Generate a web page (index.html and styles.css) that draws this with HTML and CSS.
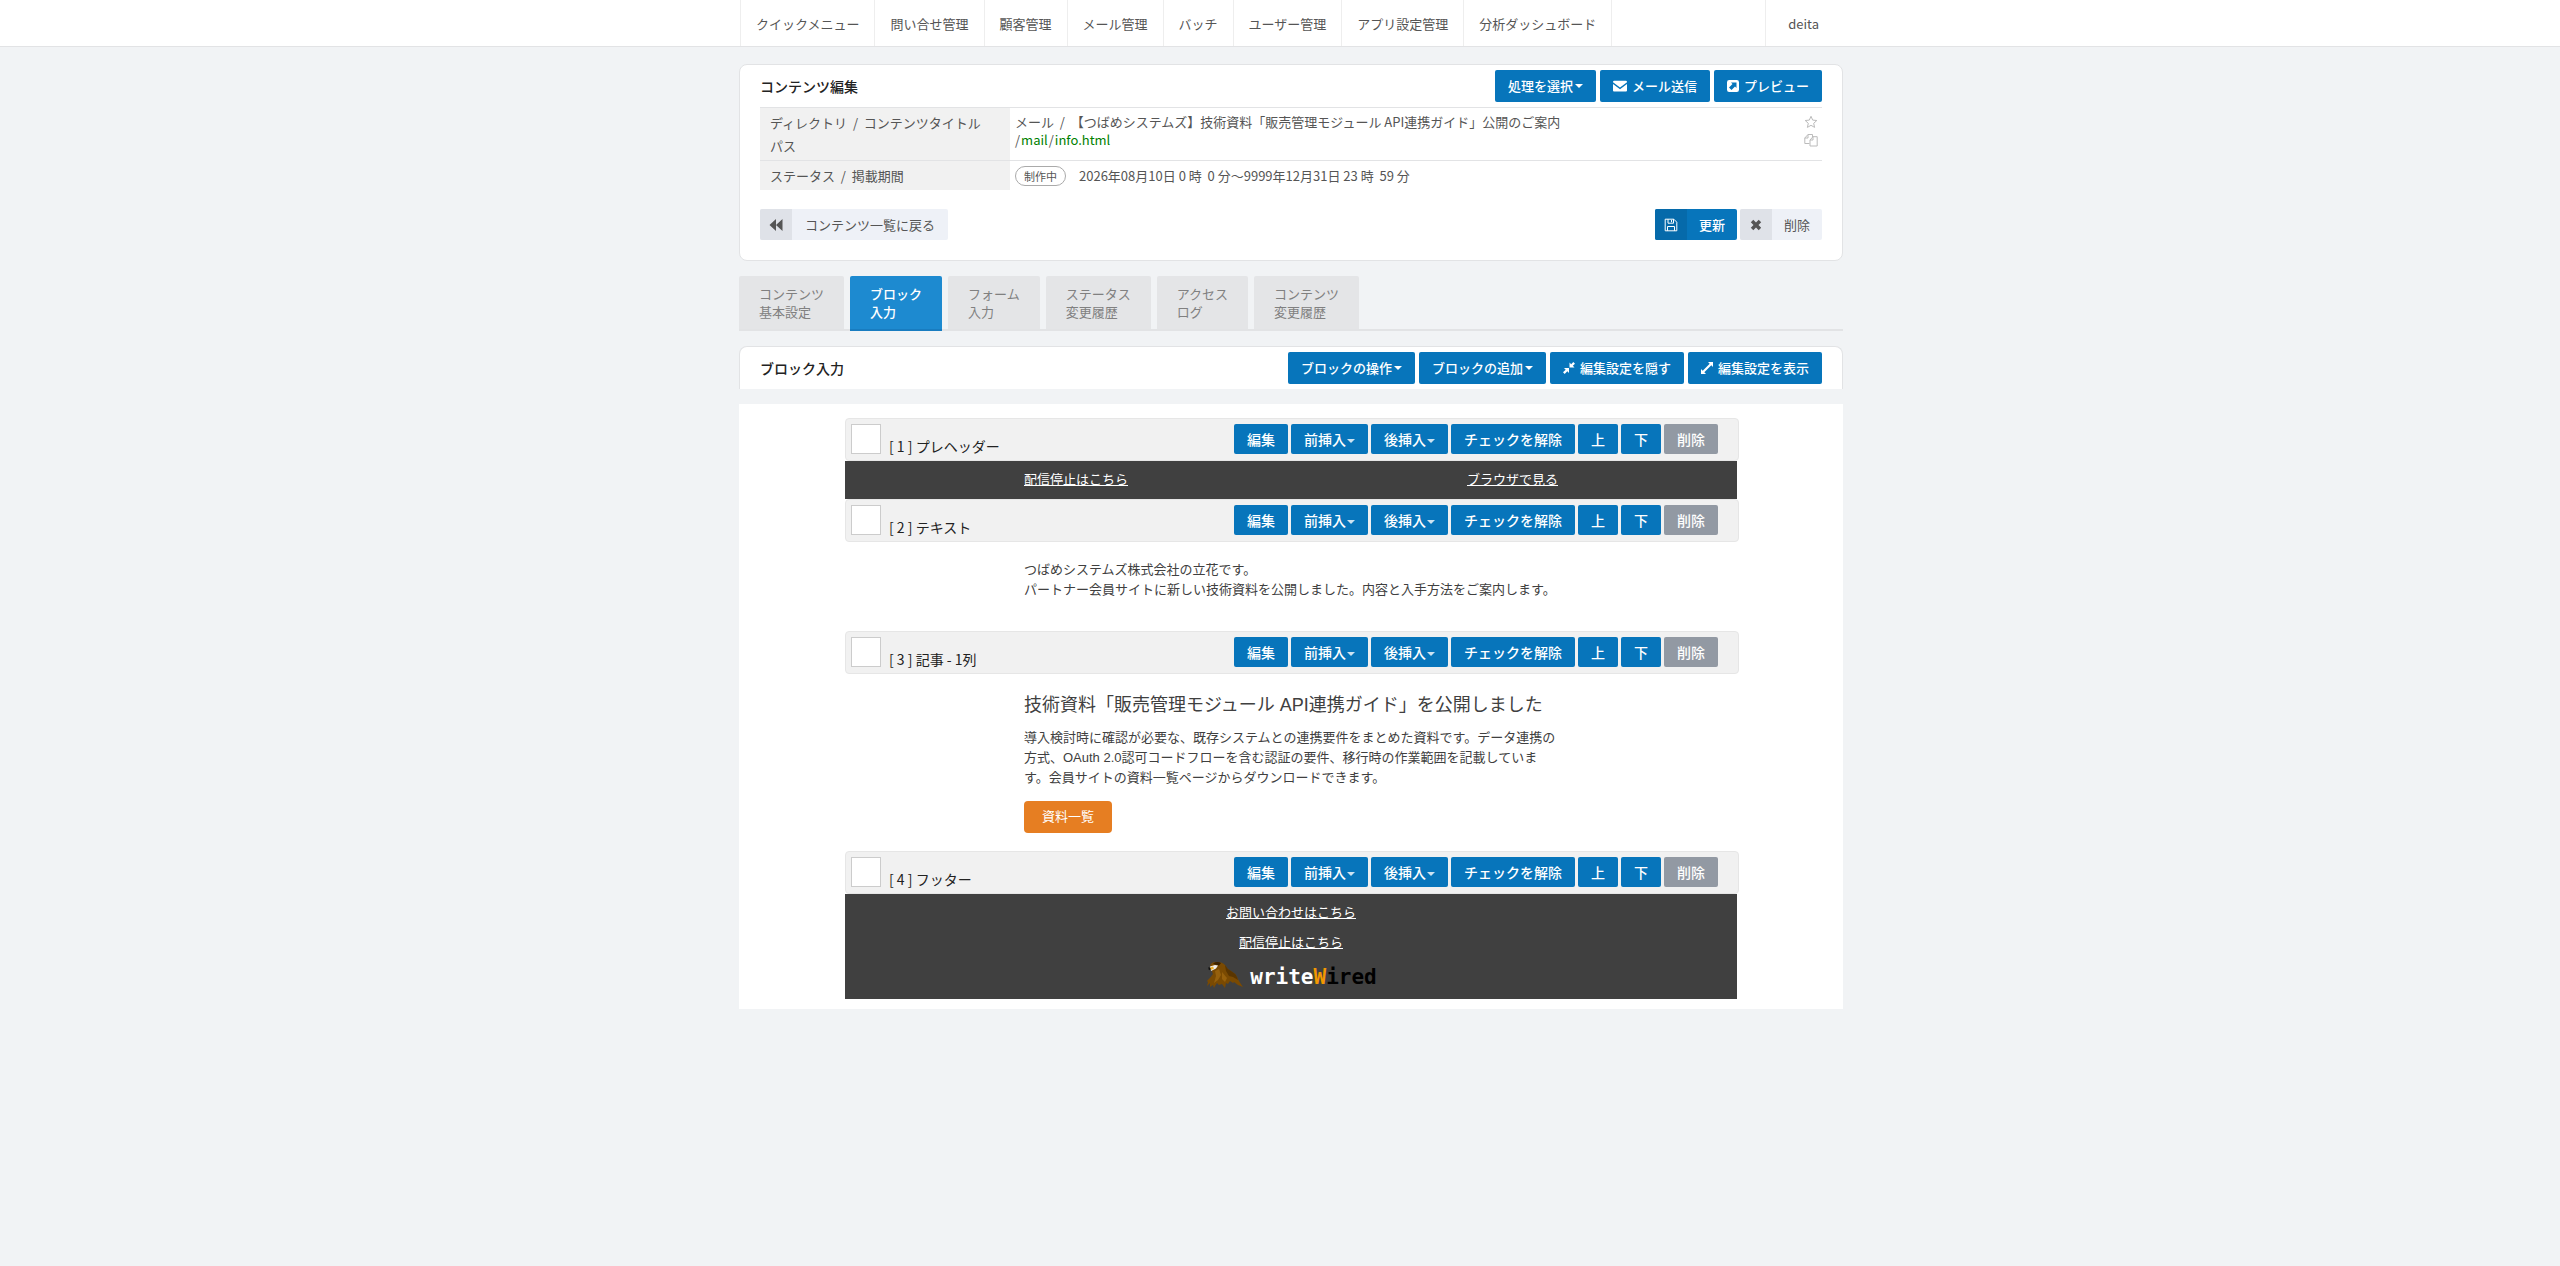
FILE: index.html
```
<!DOCTYPE html>
<html lang="ja">
<head>
  <meta charset="UTF-8">
  <meta name="viewport" content="width=device-width, initial-scale=1.0">
  <title>コンテンツ編集</title>
  <link rel="stylesheet" href="styles.css">
</head>
<body>
  <header class="site-header">
    <nav class="wrap">
      <a href="#">クイックメニュー</a>
      <a href="#">問い合せ管理</a>
      <a href="#">顧客管理</a>
      <a href="#">メール管理</a>
      <a href="#">バッチ</a>
      <a href="#">ユーザー管理</a>
      <a href="#">アプリ設定管理</a>
      <a href="#">分析ダッシュボード</a>
      <a href="#" class="user">deita</a>
    </nav>
  </header>

  <main class="wrap">
    <!-- Content summary -->
    <section class="panel">
      <div class="panel-head">
        <h1>コンテンツ編集</h1>
        <div class="tools">
          <button class="btn">処理を選択<i class="caret"></i></button>
          <button class="btn"><svg class="icon" viewBox="0 0 14 14"><path d="M0 3.2V3q0-1.2 1.2-1.2h11.600q1.200 0 1.200 1.200v.2L7 8.500z"/><path d="M0 5v6.500q0 1 1 1h12q1 0 1-1V5L7 10.200z"/></svg>メール送信</button>
          <button class="btn"><svg class="icon small" viewBox="0 0 12 12"><path fill-rule="evenodd" d="M2.200 0h7.600Q12 0 12 2.200v7.600Q12 12 9.800 12H2.200Q0 12 0 9.800V2.200Q0 0 2.200 0zM4 2.500l1.500 1.500L2 7.500l2.500 2.500L8 6.500 9.500 8V2.500z"/></svg>プレビュー</button>
        </div>
      </div>
      <table class="info">
        <tr>
          <th scope="row">ディレクトリ&nbsp; / &nbsp;コンテンツタイトル<br>パス</th>
          <td>
            <div class="line"><span>メール&nbsp; / &nbsp;【つばめシステムズ】技術資料「販売管理モジュール API連携ガイド」公開のご案内</span>
              <button class="ghost" aria-label="お気に入り"><svg viewBox="0 0 14 14"><path d="M7 1.300l1.700 3.800 4.100.4-3.100 2.800.9 4.100L7 10.300l-3.600 2.100.9-4.100-3.100-2.800 4.100-.4z"/></svg></button></div>
            <div class="line"><span class="path">/<a href="#">mail</a>/<a href="#">info.html</a></span>
              <button class="ghost" aria-label="コピー"><svg viewBox="0 0 14 14"><path d="M5.500 10.500H.8V5L4 1.500h4.500v2.600M4 1.500V5H.8M6 13V7l3-3.300h4.200V13zM9 3.700V7H6"/></svg></button></div>
          </td>
        </tr>
        <tr>
          <th scope="row">ステータス&nbsp; / &nbsp;掲載期間</th>
          <td><span class="status">制作中</span>2026年08月10日 0 時&nbsp; 0 分～9999年12月31日 23 時&nbsp; 59 分</td>
        </tr>
      </table>
      <div class="actions">
        <button class="split"><span class="mark"><svg viewBox="0 0 14 14"><path d="M7 1v12L.5 7zM13.500 1v12L7 7z"/></svg></span><span class="text wide">コンテンツ一覧に戻る</span></button>
        <div class="group">
          <button class="split primary"><span class="mark"><svg class="outline" viewBox="0 0 14 14"><path d="M1.200 1.200h8.600l3 3v8.600H1.200zM4 1.200v4h5.500v-4M3.500 12.800V8.500h7v4.300M7.500 2v2.200"/></svg></span><span class="text">更新</span></button>
          <button class="split"><span class="mark"><svg viewBox="0 0 14 14"><path d="M4.300 1.800L7 4.500l2.700-2.700 2.500 2.500L9.500 7l2.700 2.700-2.500 2.500L7 9.500l-2.700 2.700-2.500-2.500L4.500 7 1.800 4.300z"/></svg></span><span class="text">削除</span></button>
        </div>
      </div>
    </section>

    <nav class="tabs">
      <a href="#">コンテンツ<br>基本設定</a>
      <a href="#" class="active">ブロック<br>入力</a>
      <a href="#">フォーム<br>入力</a>
      <a href="#">ステータス<br>変更履歴</a>
      <a href="#">アクセス<br>ログ</a>
      <a href="#">コンテンツ<br>変更履歴</a>
    </nav>

    <section class="panel open">
      <div class="panel-head">
        <h2>ブロック入力</h2>
        <div class="tools">
          <button class="btn">ブロックの操作<i class="caret"></i></button>
          <button class="btn">ブロックの追加<i class="caret"></i></button>
          <button class="btn"><svg class="icon small" viewBox="0 0 12 12"><path d="M6 6v5L4.300 9.300 1.700 12 0 10.300l2.700-2.600L1 6zM6.500 5.500v-5l1.700 1.700L10.300 0 12 1.700 9.800 3.800l1.700 1.700z"/></svg>編集設定を隠す</button>
          <button class="btn"><svg class="icon small" viewBox="0 0 12 12"><path d="M0 12V7l1.700 1.700 7-7L7 0h5v5l-1.700-1.700-7 7L5 12z"/></svg>編集設定を表示</button>
        </div>
      </div>
    </section>

    <!-- Mail blocks -->
    <section class="canvas">
      <div class="block-bar">
        <input type="checkbox" id="block1"><label for="block1">[ 1 ] プレヘッダー</label>
        <div class="block-tools">
          <button>編集</button><button>前挿入<i class="caret"></i></button><button>後挿入<i class="caret"></i></button><button>チェックを解除</button><button>上</button><button>下</button><button class="remove">削除</button>
        </div>
      </div>
      <div class="preheader">
        <div class="columns"><a href="#">配信停止はこちら</a><a href="#">ブラウザで見る</a></div>
      </div>

      <div class="block-bar">
        <input type="checkbox" id="block2"><label for="block2">[ 2 ] テキスト</label>
        <div class="block-tools">
          <button>編集</button><button>前挿入<i class="caret"></i></button><button>後挿入<i class="caret"></i></button><button>チェックを解除</button><button>上</button><button>下</button><button class="remove">削除</button>
        </div>
      </div>
      <div class="mail-body intro">
        <p>つばめシステムズ株式会社の立花です。<br>パートナー会員サイトに新しい技術資料を公開しました。内容と入手方法をご案内します。</p>
      </div>

      <div class="block-bar">
        <input type="checkbox" id="block3"><label for="block3">[ 3 ] 記事 - 1列</label>
        <div class="block-tools">
          <button>編集</button><button>前挿入<i class="caret"></i></button><button>後挿入<i class="caret"></i></button><button>チェックを解除</button><button>上</button><button>下</button><button class="remove">削除</button>
        </div>
      </div>
      <div class="mail-body article">
        <h3>技術資料「販売管理モジュール API連携ガイド」を公開しました</h3>
        <p>導入検討時に確認が必要な、既存システムとの連携要件をまとめた資料です。データ連携の方式、OAuth 2.0認可コードフローを含む認証の要件、移行時の作業範囲を記載しています。会員サイトの資料一覧ページからダウンロードできます。</p>
        <a href="#" class="cta">資料一覧</a>
      </div>

      <div class="block-bar">
        <input type="checkbox" id="block4"><label for="block4">[ 4 ] フッター</label>
        <div class="block-tools">
          <button>編集</button><button>前挿入<i class="caret"></i></button><button>後挿入<i class="caret"></i></button><button>チェックを解除</button><button>上</button><button>下</button><button class="remove">削除</button>
        </div>
      </div>
      <div class="mail-footer">
        <a href="#">お問い合わせはこちら</a>
        <a href="#">配信停止はこちら</a>
        <div class="logo">
          <svg viewBox="0 0 40 28">
            <path fill="#7a4a02" d="M5 6Q6 2 11 2q6-.5 9 3 2 4 6 6 4 2 6 6 1 3 6 10l-5-2-4-3-1 1-3-2-2 3-2-1-1 5-3-4-3 1-2-2-2 3-1 2-1-3-3 2v-4l-3 3 1-4-1-1q4-4 6-7l-2-5z"/>
            <path fill="#5a3500" d="M20 5q2 4 6 6 4 2 6 6l1 3-5-3-4-1-3-5z"/>
            <path fill="#96600c" d="M10 11l4-2 2 6-3 5-4 3 2-7z"/>
            <path fill="#96600c" d="M17 12l5 6-2 4-3-3z"/>
            <path fill="#3a2200" d="M8 3.500q4-2.500 8-.5l-2 2.500-4-1z"/>
            <path fill="#eee" d="M5 6.500l5-1.500 3 .5-2 3-5 2.500z"/>
            <path fill="#f0b429" d="M4.500 8L8 6.500l1 2-3 1.500z"/>
            <path fill="#111" d="M3.500 7l2 1v2.500l-2-1z"/>
          </svg>
          <strong>write<b>W</b><em>ired</em></strong>
        </div>
      </div>
    </section>
  </main>
</body>
</html>
```

FILE: styles.css
```
/* General */
* {
  box-sizing: border-box;
}
body {
  margin: 0;
  background: #f1f3f5;
  color: #555;
  font-family: "Noto Sans CJK JP", sans-serif;
  font-size: 13px;
  line-height: 18px;
}
a {
  color: inherit;
  text-decoration: none;
}
button {
  border: 0;
  font: inherit;
  cursor: pointer;
}
h1, h2, h3, p {
  margin: 0;
}
.site-header,
main {
  padding-left: 22px;
}
.wrap {
  max-width: 1104px;
  margin: 0 auto;
}

/* Header */
.site-header {
  background: #fff;
  border-bottom: 1px solid #e2e3e5;
}
.site-header nav {
  display: flex;
  padding-left: 1px;
}
.site-header a {
  padding: 15px 15px 13px;
  border-right: 1px solid #eee;
}
.site-header a:first-child {
  border-left: 1px solid #eee;
}
.site-header .user {
  margin-left: auto;
  padding: 15px 24px 13px 22px;
  border-right: 0;
  border-left: 1px solid #eee;
}

/* Panels */
main.wrap {
  max-width: 1126px;
}
.panel {
  margin-top: 17px;
  padding: 5px 20px 20px;
  background: #fff;
  border: 1px solid #e2e3e5;
  border-radius: 8px;
}
.panel-head {
  display: flex;
  justify-content: space-between;
  align-items: center;
}
.panel-head h1,
.panel-head h2 {
  color: #222;
  font-size: 14px;
  font-weight: 500;
}
.tools {
  display: flex;
  gap: 4px;
}
.btn {
  display: flex;
  align-items: center;
  height: 32px;
  padding: 0 13px;
  background: #0775bb;
  border-radius: 2px;
  color: #fff;
  font-weight: 500;
}
.caret {
  display: inline-block;
  margin-left: 2px;
  border: 4px solid transparent;
  border-top-color: currentColor;
  border-bottom: 0;
}
.icon {
  width: 14px;
  height: 14px;
  margin-right: 5px;
  fill: currentColor;
}
.icon.small {
  width: 12px;
  height: 12px;
}

/* Info table */
.info {
  width: 100%;
  margin-top: 5px;
  border-collapse: collapse;
}
.info tr {
  border-top: 1px solid #e2e3e5;
}
.info th {
  width: 250px;
  padding: 3px 10px;
  background: #f1f1f1;
  font-weight: normal;
  line-height: 23px;
  text-align: left;
}
.info td {
  padding: 5px 0 4px 5px;
  vertical-align: top;
}
.line {
  display: flex;
  justify-content: space-between;
}
.path a {
  margin: 0 1px;
  color: green;
}
.ghost {
  width: 22px;
  height: 18px;
  padding: 2px 4px;
  background: none;
}
.ghost svg {
  display: block;
  width: 14px;
  height: 14px;
  fill: none;
  stroke: #bbb;
}
.status {
  display: inline-block;
  margin-right: 13px;
  padding: 0 8px;
  border: 1px solid #aaa;
  border-radius: 10px;
  font-size: 11px;
}

/* Action buttons */
.actions {
  display: flex;
  justify-content: space-between;
  margin-top: 19px;
}
.group {
  display: flex;
  gap: 3px;
}
.split {
  display: flex;
  height: 31px;
  padding: 0;
  background: #eef1f7;
  border-radius: 2px;
  color: #555;
  overflow: hidden;
}
.mark {
  display: flex;
  align-items: center;
  align-self: stretch;
  padding: 0 9px;
  background: #dfe2e8;
}
.mark svg {
  width: 14px;
  height: 14px;
  fill: currentColor;
}
.mark .outline {
  fill: none;
  stroke: currentColor;
}
.text {
  align-self: center;
  padding: 0 12px;
}
.wide {
  padding: 0 13px;
}
.primary {
  background: #0775bb;
  color: #fff;
  font-weight: 500;
}
.primary .mark {
  background: #066aaa;
}

/* Tabs */
.tabs {
  display: flex;
  gap: 6px;
  margin-top: 15px;
  border-bottom: 2px solid #e2e3e5;
}
.tabs a {
  margin-bottom: -2px;
  padding: 9px 20px 8px;
  background: #e4e5e7;
  border-bottom: 2px solid #e2e3e5;
  border-radius: 2px 2px 0 0;
  color: #808080;
}
.tabs .active {
  background: #1d8ad0;
  border-color: #187cc0;
  color: #fff;
  font-weight: 500;
}
.panel.open {
  margin-top: 15px;
  padding-bottom: 5px;
  border-bottom: 0;
  border-radius: 8px 8px 0 0;
}

/* Mail canvas */
.canvas {
  margin-top: 15px;
  padding: 14px 104px 10px 106px;
  background: #fff;
}
.block-bar {
  display: flex;
  align-items: flex-start;
  padding: 5px 20px 6px 5px;
  background: #f1f1f1;
  border: 1px solid #e6e6e6;
  border-radius: 4px;
  color: #222;
  font-size: 14px;
}
.block-bar input {
  appearance: none;
  width: 30px;
  height: 30px;
  margin: 0;
  background: #fff;
  border: 1px solid #ccc;
}
.block-bar label {
  margin: 15px auto 0 8px;
  line-height: 14px;
}
.block-tools {
  display: flex;
  gap: 3px;
}
.block-tools button {
  height: 30px;
  padding: 0 13px;
  background: #0775bb;
  border-radius: 2px;
  color: #fff;
  font-weight: 500;
}
.block-tools .caret {
  margin-left: 1px;
  vertical-align: middle;
  opacity: .8;
}
.block-tools .remove {
  background: #9299a3;
}
.preheader,
.mail-footer {
  margin-right: 2px;
  background: #404040;
  color: #fff;
}
.preheader a,
.mail-footer a {
  text-decoration: underline;
}
.columns {
  display: flex;
  justify-content: space-between;
  max-width: 534px;
  margin: 0 auto;
  padding: 9px 0 11px;
}
.mail-body {
  max-width: 536px;
  margin: 0 auto;
  color: #404040;
  font-family: "Liberation Sans", "Noto Sans CJK JP", sans-serif;
  line-height: 20px;
}
.intro {
  padding: 18px 0 31px;
}
.article {
  padding: 19px 0 18px;
}
.article h3 {
  margin-bottom: 11px;
  font-size: 18px;
  font-weight: normal;
  line-height: 24px;
}
.cta {
  display: block;
  width: fit-content;
  margin-top: 13px;
  padding: 6px 18px;
  background: #e67e22;
  border-radius: 4px;
  color: #fff;
}
.mail-footer {
  display: flex;
  flex-direction: column;
  align-items: center;
  padding: 3px 0 11px;
  line-height: 30px;
}
.logo {
  display: flex;
  align-items: flex-end;
  gap: 5px;
  margin-top: 3px;
}
.logo svg {
  width: 40px;
  height: 28px;
}
.logo strong {
  font: bold 21px/22px "DejaVu Sans Mono", monospace;
}
.logo b {
  color: #f39800;
}
.logo em {
  color: #000;
  font-style: normal;
}
```
